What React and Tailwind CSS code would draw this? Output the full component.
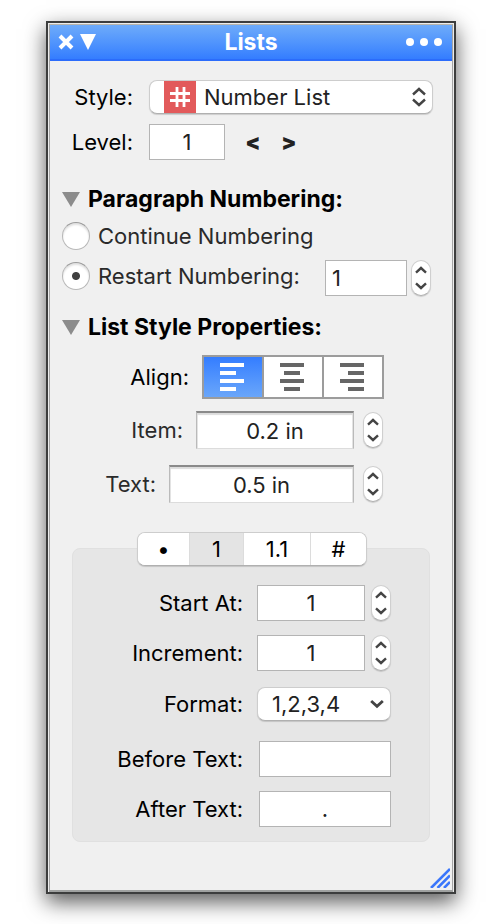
import React, { useState } from 'react';

const fieldClass = 'border border-[#b4b4b4] bg-white text-[#222] text-center outline-none min-w-0 rounded-none';

const Chevron = ({ up = false, className }) => (
  <svg viewBox="0 0 12 8" className={className} fill="none" stroke="#444" strokeWidth="2.4">
    <path d={up ? 'M1 6.6 6 2l5 4.6' : 'M1 1.4 6 6l5-4.6'} />
  </svg>
);

const Stepper = ({ name }) => (
  <span className="flex flex-col shrink-0 w-5 h-9 py-px rounded-full bg-white border border-[#cfcfcf] border-b-[#b0b0b0] shadow-[0_1px_1px_rgba(0,0,0,0.15)]">
    <button type="button" aria-label={`Increase ${name}`} className="flex-1 flex items-center justify-center">
      <Chevron up className="w-3 h-2" />
    </button>
    <button type="button" aria-label={`Decrease ${name}`} className="flex-1 flex items-center justify-center">
      <Chevron className="w-3 h-2" />
    </button>
  </span>
);

const SectionTitle = ({ children, className = '' }) => (
  <h2 className={className}>
    <button type="button" className="flex items-center gap-2 h-6 font-bold text-[23px] text-black">
      <svg viewBox="0 0 18 15" className="w-[18px] h-[15px]">
        <path d="M0 0h18L9 15z" fill="#8c8c8c" />
      </svg>
      {children}
    </button>
  </h2>
);

const Radio = ({ id, label, checked, onChange }) => (
  <div className="flex items-center gap-2">
    <input
      id={id}
      type="radio"
      name="numbering"
      checked={checked}
      onChange={onChange}
      className="appearance-none shrink-0 w-7 h-7 rounded-full bg-white border border-[#b8b8b8] border-t-[#9a9a9a] shadow-[inset_0_2px_2px_rgba(0,0,0,0.12)] checked:bg-[radial-gradient(circle,#404040_0,#404040_3.5px,#fff_4.5px)]"
    />
    <label htmlFor={id} className="text-[#2a2a2a] whitespace-nowrap">{label}</label>
  </div>
);

const alignments = [
  { id: 'left', path: 'M0 2h24M0 10h16M0 18h24M0 26h16' },
  { id: 'center', path: 'M0 2h24M4 10h16M0 18h24M4 26h16' },
  { id: 'right', path: 'M0 2h24M8 10h16M0 18h24M8 26h16' },
];

const AlignGroup = ({ value, onChange }) => (
  <div role="group" aria-labelledby="align-label" className="flex w-[182px] h-11 border-2 border-[#9c9c9c] divide-x-2 divide-[#9c9c9c]">
    {alignments.map(({ id, path }) => (
      <button
        key={id}
        type="button"
        aria-label={id}
        aria-pressed={value === id}
        onClick={() => onChange(id)}
        className={`flex-1 flex justify-center items-center pr-[2px] ${
          value === id ? 'bg-linear-to-b from-[#347dff] to-[#6aa6fa] text-white' : 'bg-white text-[#666]'
        }`}
      >
        <svg viewBox="0 0 24 28" className="w-6 h-7" stroke="currentColor" strokeWidth="4">
          <path d={path} />
        </svg>
      </button>
    ))}
  </div>
);

const tabs = [
  { label: '•', width: 'w-[52px]' },
  { label: '1', width: 'w-[54px]' },
  { label: '1.1', width: 'w-[67px]' },
  { label: '#', width: 'w-[55px]' },
];

const MeasureRow = ({ id, label, value, width, className }) => (
  <div className={`flex items-center justify-end pr-[69px] ${className}`}>
    <label htmlFor={id} className="mr-[13px] text-[#2a2a2a]">{label}</label>
    <input
      id={id}
      defaultValue={value}
      className={`${width} h-[38px] bg-white text-center text-[#222] outline-none border border-[#bababa] border-t-2 border-t-[#8a8a8a] border-b-[#dcdcdc] shadow-[inset_0_2px_1px_#dcdcdc,inset_1px_0_0_#e4e4e4,inset_-1px_0_0_#e4e4e4]`}
    />
    <span className="flex ml-[9px]"><Stepper name={id} /></span>
  </div>
);

const PanelRow = ({ id, label, children, className = '' }) => (
  <div className={`flex items-center gap-[14px] ${className}`}>
    <label htmlFor={id} className="flex-1 text-right whitespace-nowrap">{label}</label>
    <div className="flex items-center justify-end w-[134px]">{children}</div>
  </div>
);

export default function App() {
  const [numbering, setNumbering] = useState('restart');
  const [align, setAlign] = useState('left');
  const [tab, setTab] = useState('1');

  return (
    <div className="bg-white pt-[21px] pb-[30px] pl-[46px] pr-[45px] overflow-hidden font-[Inter,'Liberation_Sans',sans-serif] text-[22px] leading-7 text-black">
      <div className="border-2 border-[#3c3d3d] bg-[#ececec] p-px pb-0 shadow-[0_8px_20px_rgba(0,0,0,0.65)]">
        <div className="relative border border-b-2 border-t-[#b8b4aa] border-x-[#a4a4a4] border-b-[#a0a2a1] bg-[#f0f0f0]">
          <header className="flex items-center h-9 px-2 bg-linear-to-b from-[#6eabfa] to-[#347dff] border-b-2 border-[#2b6cfb] text-white">
            <div className="flex-1 flex items-center gap-[6px]">
              <button type="button" aria-label="Close">
                <svg viewBox="0 0 16 16" className="w-4 h-4" stroke="currentColor" strokeWidth="4">
                  <path d="M2 2l12 12M14 2 2 14" />
                </svg>
              </button>
              <button type="button" aria-label="Collapse">
                <svg viewBox="0 0 16 16" className="w-4 h-4" fill="currentColor">
                  <path d="M0 0h16L8 16z" />
                </svg>
              </button>
            </div>
            <h1 className="font-bold text-[23px]">Lists</h1>
            <div className="flex-1 flex justify-end">
              <button type="button" aria-label="More">
                <svg viewBox="0 0 38 10" className="w-[38px] h-[10px]" fill="currentColor">
                  <circle cx="4" cy="5" r="4" />
                  <circle cx="18" cy="5" r="4" />
                  <circle cx="32" cy="5" r="4" />
                </svg>
              </button>
            </div>
          </header>

          <div className="pt-[19px] pb-12">
            <div className="flex items-center gap-4 pr-[19px]">
              <label htmlFor="style" className="w-[83px] text-right">Style:</label>
              <div className="relative flex-1">
                <select
                  id="style"
                  className="appearance-none w-full h-[34px] pl-[54px] rounded-lg bg-white text-[#222] border border-[#cdcdcd] border-b-[#b0b0b0] shadow-[0_1px_1px_rgba(0,0,0,0.15)] outline-none"
                >
                  <option>Number List</option>
                </select>
                <svg viewBox="0 0 32 32" className="absolute left-[15px] top-px w-8 h-8 pointer-events-none">
                  <path d="M0 0h32v32H0z" fill="#e25a5b" />
                  <path d="M13 6v20M20 6v20M6 12.500h20M6 19.500h20" stroke="#fff" strokeWidth="2.8" />
                </svg>
                <svg viewBox="0 0 14 20" className="absolute right-[7px] top-[7px] w-[14px] h-5 pointer-events-none" fill="none" stroke="#444" strokeWidth="2.4">
                  <path d="M1 7.500 7 2l6 5.500M1 12.500l6 5.500 6-5.500" />
                </svg>
              </div>
            </div>

            <div className="flex items-center mt-[10px]">
              <label htmlFor="level" className="w-[83px] mr-4 text-right">Level:</label>
              <input id="level" defaultValue="1" className={`${fieldClass} w-[76px] h-9`} />
              <button type="button" aria-label="Previous level" className="w-9 ml-[10px] font-black text-[#222]">&lt;</button>
              <button type="button" aria-label="Next level" className="w-9 font-black text-[#222]">&gt;</button>
            </div>

            <SectionTitle className="mt-[27px] pl-3">Paragraph Numbering:</SectionTitle>
            <div className="mt-[11px] pl-3">
              <Radio
                id="continue"
                label="Continue Numbering"
                checked={numbering === 'continue'}
                onChange={() => setNumbering('continue')}
              />
            </div>
            <div className="flex items-start mt-[10px] pl-3 pr-[21px]">
              <div className="flex items-center flex-1 h-8">
                <Radio
                  id="restart"
                  label="Restart Numbering:"
                  checked={numbering === 'restart'}
                  onChange={() => setNumbering('restart')}
                />
              </div>
              <input
                aria-label="Restart at"
                defaultValue="1"
                className="w-[82px] h-9 mr-1 pl-[6px] border border-[#b4b4b4] bg-white text-[#222] outline-none"
              />
              <Stepper name="restart number" />
            </div>

            <SectionTitle className="mt-[19px] pl-3">List Style Properties:</SectionTitle>
            <div className="flex items-center justify-end gap-[13px] mt-4 pr-[68px]">
              <span id="align-label">Align:</span>
              <AlignGroup value={align} onChange={setAlign} />
            </div>
            <MeasureRow id="item" label="Item:" value="0.2 in" width="w-[158px]" className="mt-3" />
            <MeasureRow id="text" label="Text:" value="0.5 in" width="w-[185px]" className="mt-4" />

            <div className="mt-[29px] mx-[22px]">
              <div role="tablist" className="relative z-10 flex w-fit h-[34px] ml-[65px] rounded-lg overflow-hidden bg-white border border-[#cdcdcd] border-b-[#b0b0b0] shadow-[0_1px_1px_rgba(0,0,0,0.15)] divide-x divide-[#dcdcdc]">
                {tabs.map(({ label, width }) => (
                  <button
                    key={label}
                    type="button"
                    role="tab"
                    aria-selected={tab === label}
                    onClick={() => setTab(label)}
                    className={`${width} ${tab === label ? 'bg-[#e4e4e4]' : 'bg-white'}`}
                  >
                    {label}
                  </button>
                ))}
              </div>
              <div role="tabpanel" className="-mt-[18px] pt-9 pb-[14px] pr-[38px] rounded-lg bg-[#e6e6e6] border border-[#e0e0e0]">
                <PanelRow id="start" label="Start At:">
                  <input id="start" defaultValue="1" className={`${fieldClass} flex-1 h-9 mr-[6px]`} />
                  <Stepper name="start" />
                </PanelRow>
                <PanelRow id="increment" label="Increment:" className="mt-[14px]">
                  <input id="increment" defaultValue="1" className={`${fieldClass} flex-1 h-9 mr-[6px]`} />
                  <Stepper name="increment" />
                </PanelRow>
                <PanelRow id="format" label="Format:" className="mt-4">
                  <div className="relative flex-1">
                    <select
                      id="format"
                      className="appearance-none w-full h-[34px] pl-[14px] rounded-lg bg-white text-[#222] border border-[#cdcdcd] border-b-[#b0b0b0] shadow-[0_1px_1px_rgba(0,0,0,0.15)] outline-none"
                    >
                      <option>1,2,3,4</option>
                    </select>
                    <Chevron className="absolute right-[7px] top-[12px] w-[14px] h-[10px] pointer-events-none" />
                  </div>
                </PanelRow>
                <PanelRow id="before" label="Before Text:" className="mt-5">
                  <input id="before" defaultValue="" className={`${fieldClass} w-[132px] h-9`} />
                </PanelRow>
                <PanelRow id="after" label="After Text:" className="mt-[14px]">
                  <input id="after" defaultValue="." className={`${fieldClass} w-[132px] h-9`} />
                </PanelRow>
              </div>
            </div>
          </div>

          <svg viewBox="0 0 20 20" className="absolute right-[2px] bottom-[2px] w-5 h-5" stroke="#3a76fb" strokeWidth="2.6">
            <path d="M1 20 20 1M7.500 20 20 7.500M14 20l6-6" />
          </svg>
        </div>
      </div>
    </div>
  );
}
